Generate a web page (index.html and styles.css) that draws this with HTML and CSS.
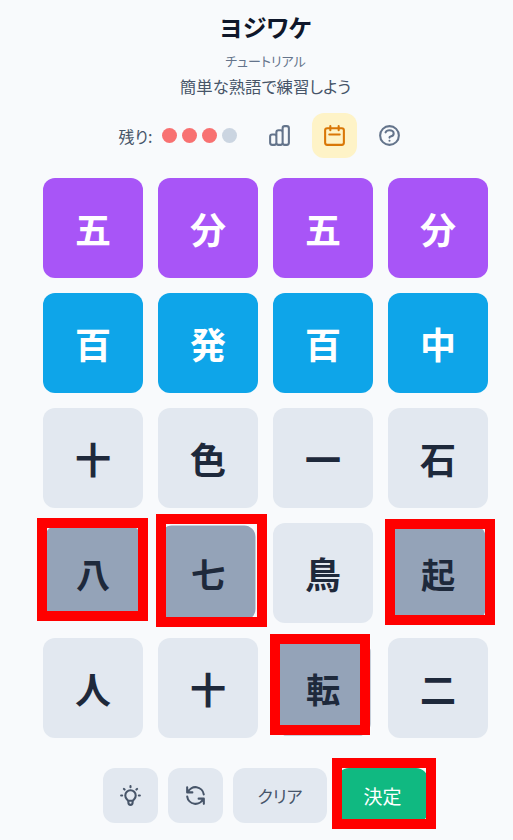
FILE: index.html
```html
<!DOCTYPE html>
<html lang="ja">
<head>
    <meta charset="UTF-8">
    <meta name="viewport" content="width=device-width, initial-scale=1.0">
    <title>ヨジワケ</title>
    <link rel="stylesheet" href="styles.css">
</head>
<body>

<div class="game">
    <header class="title-block">
        <h1>ヨジワケ</h1>
        <p class="level">チュートリアル</p>
        <p class="lead">簡単な熟語で練習しよう</p>
    </header>

    <div class="status">
        <span class="lives-label">残り:</span>
        <div class="lives">
            <span class="dot"></span>
            <span class="dot"></span>
            <span class="dot"></span>
            <span class="dot dot-empty"></span>
        </div>
        <div class="icon-row">
            <button class="icon-btn">
                <svg viewBox="0 0 24 24"><path d="M9 19v-6a2 2 0 00-2-2H5a2 2 0 00-2 2v6a2 2 0 002 2h2a2 2 0 002-2zm0 0V9a2 2 0 012-2h2a2 2 0 012 2v10m-6 0a2 2 0 002 2h2a2 2 0 002-2m0 0V5a2 2 0 012-2h2a2 2 0 012 2v14a2 2 0 01-2 2h-2a2 2 0 01-2-2z"/></svg>
            </button>
            <button class="icon-btn icon-btn-active">
                <svg viewBox="0 0 24 24"><path d="M8 7V3m8 4V3m-9 8h10M5 21h14a2 2 0 002-2V7a2 2 0 00-2-2H5a2 2 0 00-2 2v12a2 2 0 002 2z"/></svg>
            </button>
            <button class="icon-btn">
                <svg viewBox="0 0 24 24"><path d="M8.228 9c.549-1.165 2.03-2 3.772-2 2.21 0 4 1.343 4 3 0 1.4-1.278 2.575-3.006 2.907-.542.104-.994.54-.994 1.093m0 3h.01M21 12a9 9 0 11-18 0 9 9 0 0118 0z"/></svg>
            </button>
        </div>
    </div>

    <div class="board">
        <div class="tile tile-purple">五</div>
        <div class="tile tile-purple">分</div>
        <div class="tile tile-purple">五</div>
        <div class="tile tile-purple">分</div>

        <div class="tile tile-blue">百</div>
        <div class="tile tile-blue">発</div>
        <div class="tile tile-blue">百</div>
        <div class="tile tile-blue">中</div>

        <div class="tile">十</div>
        <div class="tile">色</div>
        <div class="tile">一</div>
        <div class="tile">石</div>

        <div class="cell">
            <div class="tile tile-selected">八</div>
            <span class="mark mark-hachi"></span>
        </div>
        <div class="cell">
            <div class="tile tile-selected">七</div>
            <span class="mark mark-nana"></span>
        </div>
        <div class="tile">鳥</div>
        <div class="cell">
            <div class="tile tile-selected">起</div>
            <span class="mark mark-oki"></span>
        </div>

        <div class="tile">人</div>
        <div class="tile">十</div>
        <div class="cell">
            <div class="tile tile-selected">転</div>
            <span class="mark mark-ten"></span>
        </div>
        <div class="tile">二</div>
    </div>

    <div class="actions">
        <button class="action-btn action-square">
            <svg viewBox="0 0 24 24"><path d="M9.663 17h4.673M12 3v1m6.364 1.636l-.707.707M21 12h-1M4 12H3m3.343-5.657l-.707-.707m2.828 9.9a5 5 0 117.072 0l-.548.547A3.374 3.374 0 0014 18.469V19a2 2 0 11-4 0v-.531c0-.895-.356-1.754-.988-2.386l-.548-.547z"/></svg>
        </button>
        <button class="action-btn action-square">
            <svg viewBox="0 0 24 24"><path d="M4 4v5h.582m15.356 2A8.001 8.001 0 004.582 9m0 0H9m11 11v-5h-.581m0 0a8.003 8.003 0 01-15.357-2m15.357 2H15"/></svg>
        </button>
        <button class="action-btn action-clear">クリア</button>
        <div class="submit-cell">
            <button class="action-btn action-submit">決定</button>
            <span class="mark mark-submit"></span>
        </div>
    </div>
</div>

</body>
</html>
```

FILE: styles.css
```css
body {
    font-family: "Noto Sans CJK JP", "Noto Sans", sans-serif;
    font-feature-settings: "palt";
    background-color: #f8fafc;
    color: #1e293b;
    margin: 0;
    padding: 0;
}
button {
    font-family: inherit;
    font-feature-settings: inherit;
    border: none;
    padding: 0;
    cursor: pointer;
}
svg {
    width: 25px;
    height: 25px;
    fill: none;
    stroke: currentColor;
    stroke-width: 2;
    stroke-linecap: round;
    stroke-linejoin: round;
}
.game {
    width: 445px;
    margin-left: 43px;
    padding-bottom: 17px;
}
.title-block {
    text-align: center;
    padding-top: 9px;
}
.title-block h1 {
    margin: 0;
    font-size: 24px;
    line-height: 36px;
    font-weight: 700;
    color: #0f172a;
}
.level {
    margin: 6px 0 0;
    font-size: 13px;
    line-height: 20px;
    color: #64748b;
}
.lead {
    margin: 3px 0 0;
    font-size: 16.4px;
    line-height: 24px;
    color: #475569;
}
.status {
    display: flex;
    align-items: center;
    justify-content: center;
    margin-top: 15px;
}
.lives-label {
    font-size: 16px;
    color: #475569;
    margin-right: 10px;
}
.lives {
    display: flex;
    gap: 5px;
    margin-right: 20px;
}
.dot {
    width: 15px;
    height: 15px;
    border-radius: 50%;
    background-color: #f87171;
}
.dot-empty {
    background-color: #cbd5e1;
}
.icon-row {
    display: flex;
    gap: 10px;
}
.icon-btn {
    width: 45px;
    height: 45px;
    display: flex;
    align-items: center;
    justify-content: center;
    border-radius: 12px;
    background: none;
    color: #64748b;
}
.icon-btn-active {
    background-color: #fef3c7;
    color: #d97706;
}
.board {
    display: grid;
    grid-template-columns: repeat(4, 100px);
    grid-auto-rows: 100px;
    gap: 15px;
    margin-top: 20px;
}
.cell {
    position: relative;
    display: grid;
}
.tile {
    display: flex;
    align-items: center;
    justify-content: center;
    border-radius: 12px;
    background-color: #e2e8f0;
    font-size: 36px;
    font-weight: 700;
}
.tile-purple {
    background-color: #a855f7;
    color: white;
}
.tile-blue {
    background-color: #0ea5e9;
    color: white;
}
.tile-selected {
    background-color: #94a3b8;
    transform: scale(0.95);
}
.mark {
    position: absolute;
    box-sizing: border-box;
    border: 10px solid #ff0000;
}
.mark-hachi {
    left: -5.7px;
    top: -4.7px;
    width: 110.7px;
    height: 102.7px;
}
.mark-nana {
    left: -1.7px;
    top: -8.7px;
    width: 110.4px;
    height: 113px;
}
.mark-oki {
    left: -2.7px;
    top: -3.7px;
    width: 109.4px;
    height: 106px;
}
.mark-ten {
    left: -2.7px;
    top: -3.7px;
    width: 100px;
    height: 100.4px;
}
.mark-submit {
    left: -4.7px;
    top: -9.7px;
    width: 103.4px;
    height: 71px;
}
.actions {
    display: flex;
    gap: 10px;
    margin-top: 30px;
    justify-content: center;
}
.action-btn {
    height: 55px;
    border-radius: 12px;
    background-color: #e2e8f0;
    color: #475569;
    font-size: 18px;
}
.action-square {
    width: 55px;
    display: flex;
    align-items: center;
    justify-content: center;
}
.action-clear {
    width: 94px;
    font-size: 17px;
}
.submit-cell {
    position: relative;
    display: flex;
}
.action-submit {
    width: 91px;
    background-color: #10b981;
    color: white;
    font-size: 19px;
}
```
